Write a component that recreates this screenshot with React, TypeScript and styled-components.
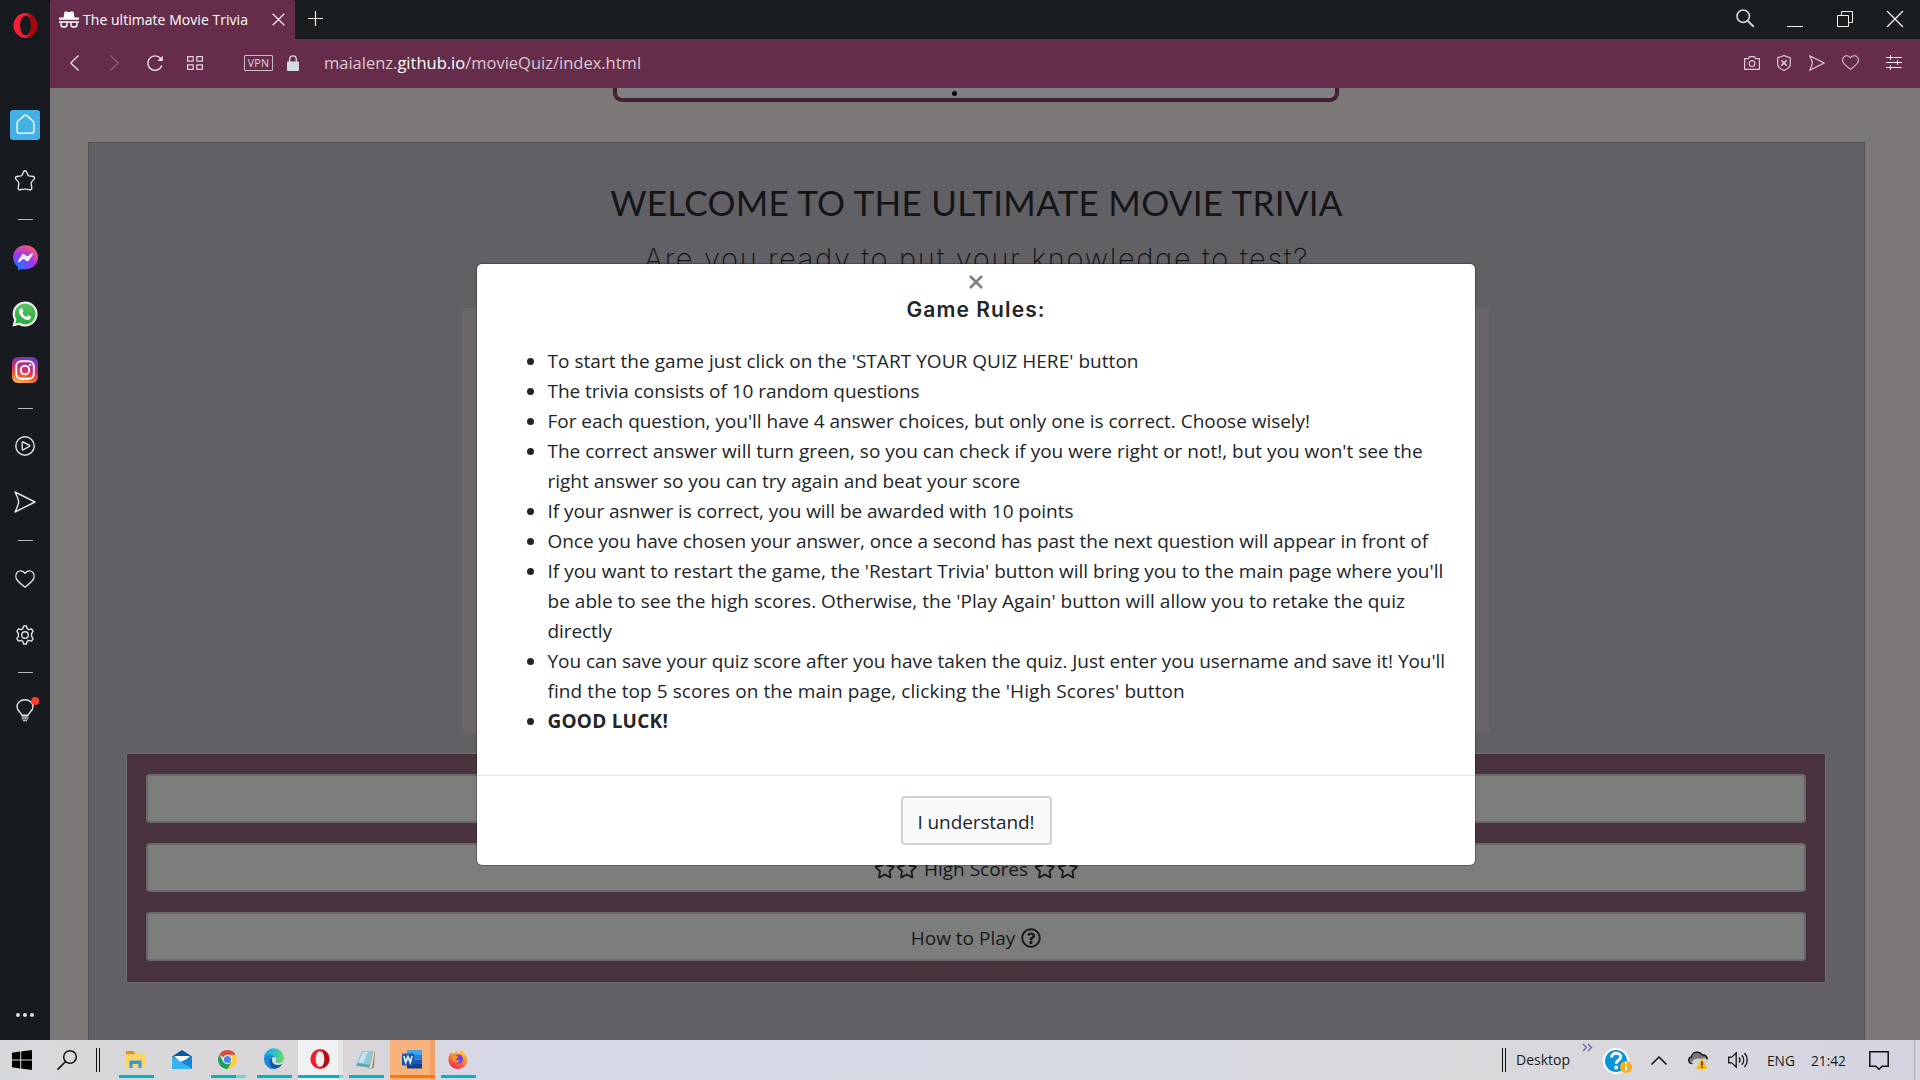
import React from 'react';
import styled, { createGlobalStyle } from 'styled-components';
import { FaRegStar, FaRegQuestionCircle } from 'react-icons/fa';

const GlobalStyle = createGlobalStyle`
  * { box-sizing: border-box; }
  body {
    margin: 0;
    overflow: hidden;
    font-family: "Open Sans", "Noto Sans", sans-serif;
  }
  svg { display: block; flex: none; overflow: visible; }
`;

const Screen = styled.div`
  display: grid;
  grid-template-columns: 50px 1fr;
  grid-template-rows: 39px 49px 952px 40px;
  width: 1920px;
  height: 1080px;
  overflow: hidden;
`;

/* ---------- sidebar ---------- */
const Sidebar = styled.nav`
  grid-row: 1 / 4;
  display: flex;
  flex-direction: column;
  background: #171b1f;
`;
const Slot = styled.div<{ $h: number; $gap?: number }>`
  display: flex;
  align-items: center;
  justify-content: center;
  height: ${p => p.$h}px;
  margin-bottom: ${p => p.$gap ?? 0}px;
`;
const Dash = styled.div`
  width: 15px;
  height: 1px;
  margin: 10px 0 9px 18px;
  background: #b3babf;
`;
const HomeTile = styled.div`
  display: flex;
  align-items: center;
  justify-content: center;
  width: 30px;
  height: 30px;
  border-radius: 3px;
  background: #45b0e6;
`;
const MoreDots = styled.div`
  display: flex;
  align-items: center;
  justify-content: center;
  gap: 3px;
  height: 50px;
  margin-top: auto;
  i {
    width: 4px;
    height: 4px;
    border-radius: 50%;
    background: #d9dee1;
  }
`;

/* ---------- browser chrome ---------- */
const TabBar = styled.header`
  display: flex;
  background: #191d20;
`;
const Tab = styled.div`
  display: flex;
  align-items: center;
  width: 245px;
  padding: 0 10px 0 9px;
  border-radius: 2px 2px 0 0;
  background: #662d4a;
  color: #fff;
`;
const TabTitle = styled.span`
  flex: 1;
  margin-left: 4px;
  font-size: 14px;
  letter-spacing: 0.04px;
  line-height: 20px;
  white-space: nowrap;
`;
const NewTab = styled.div`
  display: flex;
  align-items: center;
  margin-left: 13px;
  padding-bottom: 2px;
`;
const WindowControls = styled.div`
  display: flex;
  margin-left: auto;
`;
const Cell = styled.div<{ $w: number; $lift?: number }>`
  display: flex;
  align-items: center;
  justify-content: center;
  width: ${p => p.$w}px;
  padding-bottom: ${p => p.$lift ?? 0}px;
`;
const Toolbar = styled.div`
  display: flex;
  align-items: center;
  padding-bottom: 2px;
  background: #662d4a;
`;
const Vpn = styled.span`
  display: flex;
  align-items: center;
  justify-content: center;
  width: 29px;
  height: 16px;
  margin-left: 35px;
  border: 1px solid #cdbcc6;
  border-radius: 1px;
  color: #e4d8de;
  font-size: 10.5px;
  letter-spacing: 0.4px;
`;
const LockBox = styled.div`
  margin-left: 14px;
`;
const Url = styled.span`
  margin-left: 25px;
  color: #d9c8d1;
  font-size: 16.5px;
  line-height: 24px;
  b { color: #fff; font-weight: 400; }
`;
const Tools = styled.div`
  display: flex;
  margin-left: auto;
`;

/* ---------- page ---------- */
const Page = styled.main`
  position: relative;
  overflow: hidden;
  padding: 0 55px 0 38px;
  background: #7c7877;
`;
const LogoBox = styled.div`
  display: flex;
  justify-content: center;
  width: 726px;
  height: 14px;
  margin-left: 525px;
  padding: 3px 44px 0 0;
  border: 4px solid #421f31;
  border-top: 0;
  border-radius: 0 0 9px 9px;
  background: #808080;
`;
const LogoDot = styled.i`
  width: 5px;
  height: 5px;
  border-radius: 50%;
  background: #050505;
`;
const Card = styled.section`
  display: flex;
  flex-direction: column;
  align-items: center;
  height: 920px;
  margin-top: 40px;
  border: 1px solid #525155;
  background: #616065;
`;
const Heading = styled.h1`
  margin: 36px 0 0;
  color: #131517;
  font: 400 35px/46px Lato, "Open Sans", sans-serif;
  letter-spacing: 0.29px;
`;
const SubHeading = styled.h2`
  margin: 16px 0 0;
  color: #131517;
  font: 200 29px/36px Inter, "Open Sans", sans-serif;
  letter-spacing: 1.65px;
`;
const Poster = styled.div`
  width: 1027px;
  height: 425px;
  margin: 31px 2px 0 0;
  background: linear-gradient(90deg, #6c656b, #67626a 50%, #6b646a);
`;
const Menu = styled.div`
  display: flex;
  flex-direction: column;
  gap: 20px;
  width: 1700px;
  height: 230px;
  margin: 20px 1px 0 0;
  padding: 20px 19px;
  border: 1px solid #6d6c70;
  background: #48333f;
`;
const MenuButton = styled.button`
  display: flex;
  align-items: center;
  justify-content: center;
  gap: 6px;
  height: 49px;
  padding: 2px 0 0;
  border: 2px solid #6a6868;
  border-radius: 4px;
  background: #7c7e7c;
  color: #17191b;
  font: 400 19px/30px "Open Sans", sans-serif;
`;
const Stars = styled.span`
  display: flex;
  gap: 1px;
`;

/* ---------- dialog ---------- */
const Dialog = styled.div`
  position: absolute;
  left: 427px;
  top: 176px;
  display: flex;
  flex-direction: column;
  align-items: center;
  width: 998px;
  height: 601px;
  border-radius: 5px;
  background: #fff;
  box-shadow: 0 0 0 1px rgba(0, 0, 0, 0.25);
  color: #212529;
`;
const CloseMark = styled.div`
  margin-top: 11px;
`;
const DialogTitle = styled.h5`
  margin: 8px 0 0;
  font: 600 21px/26px Inter, "Open Sans", sans-serif;
  letter-spacing: 1.1px;
`;
const Rules = styled.ul`
  align-self: stretch;
  height: 429px;
  margin: 23px 0 0;
  padding: 0 0 0 50px;
  list-style: none;
  font-size: 19px;
  line-height: 30px;
`;
const Rule = styled.li<{ $bold?: boolean }>`
  display: flex;
  font-weight: ${p => (p.$bold ? 700 : 400)};
  &::before {
    content: "";
    flex: none;
    width: 7px;
    height: 7px;
    margin: 12px 13.500px 0 0;
    border-radius: 50%;
    background: #212529;
  }
`;
const Line = styled.span<{ $track: number }>`
  display: block;
  letter-spacing: ${p => p.$track}px;
  white-space: nowrap;
`;
const Footer = styled.div`
  display: flex;
  align-self: stretch;
  justify-content: center;
  padding-top: 20px;
  border-top: 1px solid #e6e7e8;
`;
const OkButton = styled.button`
  width: 151px;
  height: 49px;
  padding: 2px 0 0;
  border: 2px solid #d0d1d1;
  border-radius: 4px;
  background: #f8f9fa;
  color: #212529;
  font: 400 19px/30px "Open Sans", sans-serif;
  letter-spacing: -0.1px;
`;

/* ---------- taskbar ---------- */
const Taskbar = styled.footer`
  grid-column: 1 / 3;
  display: flex;
  background: linear-gradient(90deg, #d6d9dc 0, #d8d7d9 160px, #d8d6d9 380px, #d6d8e5 470px, #d5d9e4 1000px, #d9d9dc 1460px, #d8d8de 1650px, #d4d4e1 1920px);
`;
const Grip = styled.div<{ $ml: number; $gap: number }>`
  width: ${p => p.$gap}px;
  height: 24px;
  margin: 0 0 0 ${p => p.$ml}px;
  align-self: center;
  border: solid #111;
  border-width: 0 1px;
`;
const TaskButton = styled.div<{ $ml: number; $line?: string; $tile?: string; $edge?: string; $wide?: boolean }>`
  display: flex;
  align-items: center;
  justify-content: center;
  width: ${p => (p.$wide ? 45 : 35)}px;
  height: 40px;
  margin-left: ${p => p.$ml}px;
  padding: 0 2px 2px 0;
  background:
    ${p => (p.$line ? `linear-gradient(90deg, ${p.$line}) 0 35px / 100% 3px no-repeat,` : '')}
    linear-gradient(90deg, ${p => p.$tile ?? 'transparent'} 40px, ${p => p.$edge ?? 'transparent'} 40px);
`;
const Tray = styled.div`
  display: flex;
  align-items: center;
  margin-left: auto;
  color: #1a1a1a;
  font-size: 14px;
`;
const DesktopLabel = styled.span`
  width: 64px;
  margin-left: 10px;
  padding-bottom: 1px;
`;
const Chevrons = styled.div`
  align-self: flex-start;
  margin: 4px 10px 0 2px;
`;
const Lang = styled.span`
  width: 44px;
  margin-left: 2px;
  font-size: 13.7px;
`;
const Clock = styled.span`
  width: 36px;
  font-size: 13.7px;
`;
const ShowDesktop = styled.div`
  width: 6px;
  height: 40px;
  margin-left: 3px;
  border-left: 1px solid #a5a7b4;
`;

/* ---------- drawings ---------- */
const TEAL = '#00b5c3, #00b5c3';
const thin = { fill: 'none', stroke: '#dde2e4', strokeWidth: 1.4, strokeLinejoin: 'round' as const, strokeLinecap: 'round' as const };
const pink = { fill: 'none', stroke: '#d9c9d2', strokeWidth: 1.2, strokeLinejoin: 'round' as const };
const ink = { fill: 'none', stroke: '#111', strokeWidth: 1.3 };

const Opera = ({ w, h, id, a, b }: { w: number; h: number; id: string; a: string; b: string }) => (
  <svg width={w} height={h} viewBox="0 0 25 25">
    <defs>
      <linearGradient id={id} x1="0" x2="1"><stop offset=".45" stopColor={a} /><stop offset=".75" stopColor={b} /></linearGradient>
    </defs>
    <path fillRule="evenodd" fill={`url(#${id})`} d="M12.500 0a12 12.500 0 1 0 0 25a12 12.500 0 1 0 0-25zM12.500 2.800c3.400 0 5.400 4.300 5.400 9.700s-2 9.700-5.400 9.700s-5.400-4.300-5.400-9.700s2-9.700 5.400-9.700z" />
  </svg>
);

const PaperPlane = ({ s, p }: { s: number; p: typeof thin | typeof pink }) => (
  <svg width={s} height={s} viewBox="0 0 22 22"><path {...p} strokeWidth={(p.strokeWidth * 22) / s} d="M1 1l20 10L1 21c1.500-3.500 3.600-7 3.600-10S2.500 4.500 1 1z" /></svg>
);

const Heart = ({ w, h, p }: { w: number; h: number; p: typeof thin | typeof pink }) => (
  <svg width={w} height={h} viewBox="0 0 20 18" preserveAspectRatio="none">
    <path {...p} d="M10 3.400C8 .2 4 .2 2.200 2.400C.3 4.700.5 8.200 2.500 10.500C4.500 12.800 7 15 10 17.300C13 15 15.500 12.800 17.500 10.500C19.500 8.200 19.700 4.700 17.800 2.400C16 .2 12 .2 10 3.400z" />
  </svg>
);

const TabIcon = () => (
  <svg width="20" height="17" viewBox="0 0 20 17">
    <path fill="#fff" d="M5.500.8C7.500-.2 8.500 1 10 1S12.500-.2 14.500.8L15.500 6.500H20V8.800H0V6.500H4.500z" />
    <path fill="none" stroke="#fff" strokeWidth="1.400" d="M2 11h6v2.500a2.500 2.500 0 0 1-2.500 2.500h-1A2.500 2.500 0 0 1 2 13.500zM12 11h6v2.500a2.500 2.500 0 0 1-2.500 2.500h-1a2.500 2.500 0 0 1-2.500-2.500zM0 11h20" />
  </svg>
);

const rules: { bold?: boolean; lines: [string, number][] }[] = [
  { lines: [["To start the game just click on the 'START YOUR QUIZ HERE' button", 0.04]] },
  { lines: [['The trivia consists of 10 random questions', -0.055]] },
  { lines: [["For each question, you'll have 4 answer choices, but only one is correct. Choose wisely!", -0.025]] },
  { lines: [["The correct answer will turn green, so you can check if you were right or not!, but you won't see the", 0], ['right answer so you can try again and beat your score', -0.01]] },
  { lines: [['If your asnwer is correct, you will be awarded with 10 points', -0.045]] },
  { lines: [['Once you have chosen your answer, once a second has past the next question will appear in front of', -0.05]] },
  { lines: [["If you want to restart the game, the 'Restart Trivia' button will bring you to the main page where you'll", 0], ["be able to see the high scores. Otherwise, the 'Play Again' button will allow you to retake the quiz", 0.03], ['directly', -0.08]] },
  { lines: [["You can save your quiz score after you have taken the quiz. Just enter you username and save it! You'll", -0.04], ["find the top 5 scores on the main page, clicking the 'High Scores' button", 0.08]] },
  { bold: true, lines: [['GOOD LUCK!', 0.23]] },
];

const SideNav = () => (
  <Sidebar>
    <Slot $h={51} $gap={45}><Opera w={25} h={25} id="op1" a="#fa1e35" b="#a5070f" /></Slot>
    <Slot $h={57}>
      <HomeTile><svg width="19" height="21" viewBox="0 0 20 22"><path {...thin} stroke="#fff" strokeWidth="1.500" d="M1.200 9.500c0-1 .3-1.500 1-2.100L8.300 1.900c1-.9 2.400-.9 3.400 0l6.100 5.500c.7.6 1 1.100 1 2.100v8.700a2 2 0 0 1-2 2H3.200a2 2 0 0 1-2-2z" /></svg></HomeTile>
    </Slot>
    <Slot $h={54} $gap={2}><svg width="22" height="21" viewBox="0 0 22 21"><path {...thin} d="M9.600 1.700c.6-1.300 2.200-1.300 2.800 0l1.500 3.300c.2.500.6.800 1.200.9l4.200.6c1.200.2 1.600 1.700.8 2.600l-2.500 2.800c-.4.4-.5.900-.4 1.400l.6 4.900c.2 1.300-.6 1.700-1.700 1.500l-4.400-.6c-.5-.1-.9-.1-1.400 0l-4.400.6c-1.100.2-1.900-.2-1.700-1.500l.6-4.900c.1-.5 0-1-.4-1.400L1.900 9.100C1.100 8.200 1.500 6.700 2.700 6.500l4.200-.6c.6-.1 1-.4 1.200-.9z" /></svg></Slot>
    <Dash />
    <Slot $h={56}>
      <svg width="25" height="25" viewBox="0 0 25 25">
        <defs><radialGradient id="ms" cx=".2" cy="1" r="1.100"><stop offset="0" stopColor="#0a84ff" /><stop offset=".6" stopColor="#a033f0" /><stop offset="1" stopColor="#ff5c70" /></radialGradient></defs>
        <path fill="url(#ms)" d="M12.500.2C19.500.2 25 5.500 25 12.300S19.500 24.300 12.500 24.300c-1.500 0-2.800-.2-4-.6L5 25.200l-.2-3.500A12 12 0 0 1 0 12.300C0 5.500 5.500.2 12.500.2z" />
        <path fill="#f2f0fb" d="M5 15.900L9 9.600c.5-.8 1.600-1 2.300-.4l2.800 2.100h.6l4-3c.8-.5 1.700.3 1.200 1.100l-4 6.200c-.5.800-1.600 1-2.300.4l-2.800-2.100h-.6l-4 3c-.8.500-1.700-.3-1.200-1z" />
      </svg>
    </Slot>
    <Slot $h={57}>
      <svg width="26" height="26" viewBox="0 0 26 26">
        <defs><linearGradient id="wa" x1="0" y1="0" x2="0" y2="1"><stop offset="0" stopColor="#5ac467" /><stop offset="1" stopColor="#27ab3c" /></linearGradient></defs>
        <path fill="#f3f3f3" d="M.4 25.600l1.800-6.500A12.500 12.500 0 1 1 7 23.900z" />
        <path fill="url(#wa)" d="M3.200 22.700l1.200-4.200A10.400 10.400 0 1 1 7.500 21.600z" />
        <path fill="#fff" d="M9.500 7.200c.4 0 .7 0 .9.600l1 2.300c.1.300 0 .6-.2.800l-.9 1.100c.9 1.800 2.300 3 4.200 3.900l1.200-1.400c.2-.3.500-.3.800-.2l2.300 1.100c.3.200.5.300.4.700-.2 1.700-1.500 2.900-3.300 2.900C12 19 7.200 14.500 6.900 10.300c0-1.400.9-3.100 2.600-3.100z" />
      </svg>
    </Slot>
    <Slot $h={56}>
      <svg width="26" height="26" viewBox="0 0 26 26">
        <defs>
          <linearGradient id="ig" x1=".3" y1="1" x2=".6" y2="0"><stop offset="0" stopColor="#fdb64a" /><stop offset=".3" stopColor="#f0532f" /><stop offset=".55" stopColor="#cf2b78" /><stop offset="1" stopColor="#6a3cc0" /></linearGradient>
        </defs>
        <rect width="26" height="26" rx="6" fill="url(#ig)" />
        <g fill="none" stroke="#fff" strokeWidth="1.900"><rect x="4.200" y="4.200" width="17.600" height="17.600" rx="5" /><circle cx="13" cy="13" r="4.300" /></g>
        <circle cx="18.200" cy="7.900" r="1.200" fill="#fff" />
      </svg>
    </Slot>
    <Dash />
    <Slot $h={55}><svg width="20" height="20" viewBox="0 0 20 20"><circle cx="10" cy="10" r="9.200" {...thin} /><path {...thin} d="M7.200 6.500c0-.5.400-.7.800-.5l6.300 3.200c.6.3.6.9 0 1.200L8 13.800c-.4.200-.8 0-.8-.5z" /></svg></Slot>
    <Slot $h={57}><PaperPlane s={22} p={thin} /></Slot>
    <Dash />
    <Slot $h={57}><Heart w={20} h={18} p={thin} /></Slot>
    <Slot $h={55}>
      <svg width="18" height="20" viewBox="0 0 18 20"><circle cx="9" cy="10" r="3.300" {...thin} /><path {...thin} d="M7.600 1h2.800l.8 2.700 1.700 1 2.700-.9 1.500 2.500-1.500 2.200v2.800l1.500 2.300-1.500 2.500-2.700-.8-1.700 1-.8 2.700H7.600l-.8-2.700-1.700-1-2.700.8L.9 13.600l1.500-2.300V8.500L.9 6.300l1.500-2.500 2.700.9 1.700-1z" /></svg>
    </Slot>
    <Dash />
    <Slot $h={56}>
      <svg width="18" height="22" viewBox="0 0 18 22">
        <path {...thin} d="M5.800 16.200c0-2.500-4.800-4-4.800-8.500C1 3.500 4.500.8 9 .8s8 2.700 8 6.900c0 4.500-4.800 6-4.800 8.500z" />
        <path stroke="#b9c0c4" strokeWidth="1.300" d="M5.700 18h6.600M5.700 19.900h6.600M7 21.600h4" />
        <circle cx="19.200" cy="2" r="4" fill="#ff3b30" />
      </svg>
    </Slot>
    <MoreDots><i /><i /><i /></MoreDots>
  </Sidebar>
);

const BrowserBars = () => (
  <>
    <TabBar>
      <Tab>
        <TabIcon />
        <TabTitle>The ultimate Movie Trivia</TabTitle>
        <svg width="13" height="13" viewBox="0 0 13 13"><path d="M.7.7l11.600 11.600M12.300.7L.7 12.300" stroke="#f0e6eb" strokeWidth="1.300" /></svg>
      </Tab>
      <NewTab><svg width="15" height="15" viewBox="0 0 15 15"><path d="M7.500 0v15M0 7.500h15" stroke="#eee" strokeWidth="1.200" /></svg></NewTab>
      <WindowControls>
        <Cell $w={50} $lift={3}><svg width="18" height="18" viewBox="0 0 18 18"><circle cx="7.200" cy="7.200" r="6.200" fill="none" stroke="#cdd0d2" strokeWidth="1.700" /><path d="M11.700 11.700l6 6" stroke="#cdd0d2" strokeWidth="2" /></svg></Cell>
        <Cell $w={50} $lift={1}><svg width="16" height="16" viewBox="0 0 16 16"><path d="M0 15.500h16" stroke="#f2f2f2" /></svg></Cell>
        <Cell $w={50} $lift={1}><svg width="16" height="16" viewBox="0 0 16 16"><path d="M.5 4.500h11v11H.5zM4.500 4.500v-4h11v11h-4" fill="none" stroke="#f2f2f2" /></svg></Cell>
        <Cell $w={50} $lift={1}><svg width="16" height="16" viewBox="0 0 16 16"><path d="M0 0l16 16M16 0L0 16" stroke="#f2f2f2" strokeWidth="1.300" /></svg></Cell>
      </WindowControls>
    </TabBar>
    <Toolbar>
      <Cell $w={49}><svg width="9" height="16" viewBox="0 0 9 16"><path {...pink} stroke="#efe6ea" d="M8.500.5L.8 8l7.700 7.500" /></svg></Cell>
      <Cell $w={30}><svg width="9" height="16" viewBox="0 0 9 16"><path {...pink} stroke="#935f7b" d="M.5.500L8.200 8 .5 15.500" /></svg></Cell>
      <Cell $w={52}><svg width="16" height="16" viewBox="0 0 16 16"><path {...pink} stroke="#efe6ea" strokeWidth="1.400" d="M14.800 10.500A7.200 7.200 0 1 1 13.600 3.500" /><path fill="#efe6ea" d="M15.700.8v5.200h-5.200z" /></svg></Cell>
      <Cell $w={28}><svg width="16" height="14" viewBox="0 0 16 14"><path {...pink} stroke="#e3d6dd" d="M.6.600h5.600v4.600H.6zM9.800.600h5.600v4.600H9.800zM.6 8.800h5.600v4.600H.6zM9.800 8.800h5.600v4.600H9.800z" /></svg></Cell>
      <Vpn>VPN</Vpn>
      <LockBox><svg width="12" height="16" viewBox="0 0 12 16"><path fill="none" stroke="#d6dbdf" strokeWidth="1.400" d="M2.700 7V4.200a3.300 3.300 0 0 1 6.600 0V7" /><rect y="6.500" width="12" height="9.500" rx="1" fill="#d6dbdf" /></svg></LockBox>
      <Url>maialenz.<b>github.io</b>/movieQuiz/index.html</Url>
      <Tools>
        <Cell $w={32}><svg width="16" height="14" viewBox="0 0 16 14"><path {...pink} d="M.6 2.600h3.900L5.500.600h5l1 2h3.900v10.800H.6z" /><circle {...pink} cx="8" cy="7.600" r="2.900" /></svg></Cell>
        <Cell $w={32}><svg width="14" height="16" viewBox="0 0 14 16"><path {...pink} d="M7 .5c2 1.200 4 1.800 6.300 2v6.800c0 3-3.300 5-6.300 6.200C4 14.300.7 12.300.7 9.300V2.500C3 2.300 5 1.700 7 .5z" /><path {...pink} strokeWidth="1.500" d="M4.300 5.200l5.400 5.400M9.700 5.200l-5.400 5.400" /></svg></Cell>
        <Cell $w={33}><PaperPlane s={16} p={pink} /></Cell>
        <Cell $w={34}><Heart w={17} h={15} p={pink} /></Cell>
        <Cell $w={53} $lift={1}><svg width="16" height="15" viewBox="0 0 16 15"><path d="M0 2.500h16M0 7.500h16M0 12.500h16M4.500 0v5M11.500 5v5M4.500 10v5" fill="none" stroke="#efe6ea" /></svg></Cell>
      </Tools>
    </Toolbar>
  </>
);

const RulesDialog = () => (
  <Dialog role="dialog">
    <CloseMark><svg width="14" height="14" viewBox="0 0 14 14"><path d="M1 1l12 12M13 1L1 13" stroke="#7f7f7f" strokeWidth="2.600" /></svg></CloseMark>
    <DialogTitle>Game Rules:</DialogTitle>
    <Rules>
      {rules.map(r => (
        <Rule key={r.lines[0][0]} $bold={r.bold}>
          <div>{r.lines.map(([t, k]) => <Line key={t} $track={k}>{t}</Line>)}</div>
        </Rule>
      ))}
    </Rules>
    <Footer><OkButton>I understand!</OkButton></Footer>
  </Dialog>
);

const TaskbarRow = () => (
  <Taskbar>
    <Cell $w={44}><svg width="20" height="20" viewBox="0 0 20 20"><path d="M0 2.800l8.200-1.200v7.900H0zM9.200 1.400L20 0v9.500H9.200zM0 10.500h8.200v7.900L0 17.200zM9.200 10.500H20V20L9.200 18.600z" /></svg></Cell>
    <Cell $w={46}><svg width="20" height="20" viewBox="0 0 20 20"><circle cx="13" cy="7" r="6.300" {...ink} strokeWidth="1.500" /><path {...ink} strokeWidth="1.600" d="M8.600 11.500L.5 19.600" /></svg></Cell>
    <Grip $ml={6} $gap={4} />
    <TaskButton $ml={19} $line={TEAL}>
      <svg width="19" height="17" viewBox="0 0 19 17"><path fill="#d99a13" d="M0 0h7.500l1.500 1.500v2H0z" /><path fill="#fdd663" d="M0 3.500h8L9.500 2H19v14.500H0z" /><path fill="#3b95dc" d="M3.500 17V9.500h12V17h-3v-4h-6v4z" /></svg>
    </TaskButton>
    <TaskButton $ml={11}>
      <svg width="20" height="19" viewBox="0 0 20 19"><path fill="#0b59a5" d="M0 6.500L10 0l10 6.500L10 13z" /><path fill="#fff" d="M2 6h16l-7 7H9z" /><path fill="#1684dc" d="M0 6.500l10 6.500L0 19z" /><path fill="#35b4f2" d="M0 6.500V19h20z" /><path fill="#1686dd" d="M20 6.500V19L8.500 12z" /></svg>
    </TaskButton>
    <TaskButton $ml={11} $line="#00b5c3 25px, #6fd3da 25px">
      <svg width="19" height="19" viewBox="0 0 20 20">
        <path fill="#dd4b3e" d="M10 10L1.340 5A10 10 0 0 1 18.660 5z" /><path fill="#fdce42" d="M10 5h8.660A10 10 0 0 1 10 20l4.300-7.500z" /><path fill="#1da159" d="M1.340 5A10 10 0 0 0 10 20l4.300-7.500L10 10 5.700 12.500z" />
        <circle cx="10" cy="10" r="4.900" fill="#f5f5f5" /><circle cx="10" cy="10" r="3.800" fill="#4a88ef" />
      </svg>
    </TaskButton>
    <TaskButton $ml={11} $line={TEAL}>
      <svg width="20" height="20" viewBox="0 0 20 20">
        <defs><linearGradient id="ed" x1="0" y1=".2" x2="1" y2=".4"><stop offset="0" stopColor="#1f9fe0" /><stop offset=".5" stopColor="#2bbfd0" /><stop offset="1" stopColor="#62dc5b" /></linearGradient></defs>
        <path fill="#0c59a4" d="M18.500 14.700A10 10 0 0 1 5 18.700C2 16.500 3 10.500 8.500 8.500c-1.500 3 0 7.500 5 7.500 2 0 3.500-.6 5-1.300z" />
        <path fill="#1b86d8" d="M0 10c.3-4 3.500-5.500 6.500-5.500 3.500 0 5.500 2 5.500 4-3-1.500-6.500.5-6.300 4.500.2 3.500 2.800 6 5.300 7C5 20.500 0 16 0 10z" />
        <path fill="url(#ed)" d="M0 9.500A10 10 0 0 1 20 9c0 3-2 5-5 5-2.200 0-3.600-.8-3.300-1.700.8-1.500.9-2.600 0-4C10 5.500 3.500 4.500 0 9.500z" />
      </svg>
    </TaskButton>
    <TaskButton $ml={6} $wide $line="#00b5c3 41px, #6fd3da 41px" $tile="#f0f0f0" $edge="#e2e3e4"><Opera w={20} h={20} id="op2" a="#f01c30" b="#b30c16" /></TaskButton>
    <TaskButton $ml={6} $line={TEAL}>
      <svg width="20" height="19" viewBox="0 0 20 19"><path fill="#9c8f72" d="M8 1l11 1-1 16-5 1z" /><path fill="#d8d5cc" d="M17 2l1.500.3L16 18l-3 .5z" /><path fill="#8fc8d6" d="M6 1h11.500L12.500 17.500 0 15.500z" /><path fill="#5da3b5" d="M1.500 13l12 2-1 2.500L0 15.500z" /><path fill="#c5e5ea" d="M7 2l5 .1L7 13l-4.500-.8z" /></svg>
    </TaskButton>
    <TaskButton $ml={6} $wide $line="#ff7500, #ff7500" $tile="#f8b27c" $edge="#f2a268">
      <svg width="20" height="19" viewBox="0 0 20 19"><path fill="#41a5ee" d="M5 0h15v5H5z" /><path fill="#2b7cd3" d="M5 5h15v4.500H5z" /><path fill="#185abd" d="M5 9.500h15V14H5z" /><path fill="#103f91" d="M5 14h15v4.500H5z" /><rect y="3.500" width="12" height="12" rx="1" fill="#1a56b4" /><path fill="none" stroke="#fff" strokeWidth="1.500" d="M2 6l1.700 6.500L6 6.500l2.300 6L10 6" /></svg>
    </TaskButton>
    <TaskButton $ml={6} $line={TEAL}>
      <svg width="20" height="20" viewBox="0 0 20 20">
        <defs><linearGradient id="ff" x1=".8" y1="0" x2=".3" y2="1"><stop offset="0" stopColor="#ffe23e" /><stop offset=".45" stopColor="#ff9026" /><stop offset="1" stopColor="#f3275a" /></linearGradient></defs>
        <path fill="url(#ff)" d="M1.500 5.500L3 3.500l1 1.500c1-.8 2.200-1 3-1C8 2.500 9 2 9.500 2c-.5 1 0 2 1 2 2-1 .5-2.500 2-4 .5 2.500 6.500 4.500 7 10.500A9.500 9.500 0 0 1 10 20C4.500 20 .5 15.800.5 10.700c0-2 .3-3.500 1-5.200z" />
        <circle cx="10.500" cy="10" r="4.600" fill="#7542e0" /><path fill="#ff9328" d="M4 7.500C6 5.500 9 6 10.500 8.500c-1.500.2-2.300 1-2.300 2 .8 1.500 3 1.300 4 .4-.5 2.500-3 3.400-5 2.400C5 12.200 4 10 4 7.500z" />
      </svg>
    </TaskButton>
    <Tray>
      <Grip $ml={0} $gap={4} />
      <DesktopLabel>Desktop</DesktopLabel>
      <Chevrons><svg width="11" height="7" viewBox="0 0 11 7"><path d="M1 0l3.500 3.500L1 7M6 0l3.500 3.500L6 7" fill="none" stroke="#6b63a8" strokeWidth="1.300" /></svg></Chevrons>
      <svg width="30" height="26" viewBox="0 0 30 26">
        <circle cx="13" cy="14" r="13" fill="#fff" /><circle cx="13" cy="14" r="11" fill="#0795d9" />
        <path d="M8.700 10.500c0-6 9-5.500 9-.5 0 3.200-4.500 3.300-4.500 6.700" fill="none" stroke="#fff" strokeWidth="3" /><circle cx="13.200" cy="20.500" r="1.900" fill="#fff" />
        <circle cx="23" cy="20" r="6" fill="#f8ae1a" /><path d="M23 18.500v5" stroke="#fff" strokeWidth="2" /><circle cx="23" cy="16.300" r="1.100" fill="#fff" />
      </svg>
      <Cell $w={52}><svg width="16" height="9" viewBox="0 0 16 9"><path {...ink} strokeWidth="1.500" d="M.5 8.500L8 1l7.500 7.500" /></svg></Cell>
      <Cell $w={26}>
        <svg width="20" height="18" viewBox="0 0 20 18"><path fill="#777" d="M5.500 2.500C8 .2 12 .2 13.800 3 17 2.800 19.500 5 19.300 8L2.500 12.500C-.2 11 0 7 2.500 6c.5-1.800 1.500-2.800 3-3.500z" /><path fill="#d2d2d2" d="M3 12.700c1-4.200 7-6.200 10.500-4.700 1.500-1 4-1 5.500.5 1 2-.3 4.200-2 4.200z" /><path {...ink} d="M4.500 12.700C1.500 12.700.7 11 .7 9.300c0-2 1.300-3.300 2.800-3.500C4 3 6.300 1.200 9 1.200c2.300 0 4 1 5 2.600 3 0 5.300 1.700 5.300 4.700" /><path fill="#fdb913" d="M14 7l5.700 11H8.300z" /><path d="M14 10.500v4M14 15.500v1.500" stroke="#111" strokeWidth="1.300" /></svg>
      </Cell>
      <Cell $w={54}><svg width="20" height="16" viewBox="0 0 20 16"><path {...ink} d="M.7 5.200h3L8.200.9v14.200L3.700 10.800h-3zM11 5.500c1.200 1.400 1.200 3.600 0 5M13.800 3.300c2.500 2.800 2.500 6.600 0 9.400M16.500 1c3.600 4 3.600 10 0 14" /></svg></Cell>
      <Lang>ENG</Lang>
      <Clock>21:42</Clock>
      <Cell $w={64}><svg width="20" height="19" viewBox="0 0 20 19"><path {...ink} strokeWidth="1.500" d="M.8.800h18.400v14.500h-6L10 18.200 6.800 15.300h-6z" /></svg></Cell>
      <ShowDesktop />
    </Tray>
  </Taskbar>
);

export default function App() {
  return (
    <>
      <GlobalStyle />
      <Screen>
        <SideNav />
        <BrowserBars />
        <Page>
          <LogoBox><LogoDot /></LogoBox>
          <Card>
            <Heading>WELCOME TO THE ULTIMATE MOVIE TRIVIA</Heading>
            <SubHeading>Are you ready to put your knowledge to test?</SubHeading>
            <Poster />
            <Menu>
              <MenuButton />
              <MenuButton>
                <Stars><FaRegStar size={21.5} /><FaRegStar size={21.5} /></Stars>
                High Scores
                <Stars><FaRegStar size={21.5} /><FaRegStar size={21.5} /></Stars>
              </MenuButton>
              <MenuButton>How to Play <FaRegQuestionCircle size={20} /></MenuButton>
            </Menu>
          </Card>
          <RulesDialog />
        </Page>
        <TaskbarRow />
      </Screen>
    </>
  );
}
